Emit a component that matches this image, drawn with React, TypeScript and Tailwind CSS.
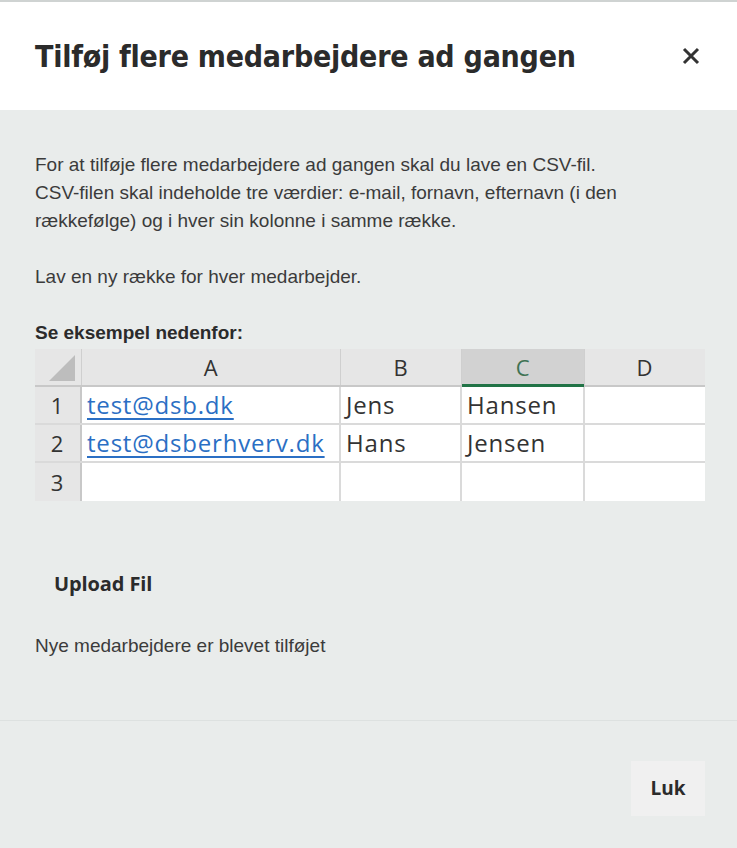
import React from "react";

const cols = [
  { label: "", w: "w-[47px]" },
  { label: "A", w: "w-[259px]" },
  { label: "B", w: "w-[121px]" },
  { label: "C", w: "w-[123px]" },
  { label: "D", w: "flex-1" },
];

const rows = [
  ["1", "test@dsb.dk", "Jens", "Hansen", ""],
  ["2", "test@dsberhverv.dk", "Hans", "Jensen", ""],
  ["3", "", "", "", ""],
];

const Sheet: React.FC = () => {
  return (
    <div className="w-[670px] font-['Open_Sans',sans-serif] text-[24px] tracking-[0.8px] text-[#333]">
      <div className="flex h-[38px] bg-[#e6e6e6] border-b-2 border-[#c8c8c8] text-[22px]">
        {cols.map((c, i) => (
          <div
            key={i}
            className={`${c.w} relative flex items-center justify-center border-r border-[#cfcfcf] last:border-r-0 ${
              c.label === "C" ? "bg-[#d2d2d2] text-[#3f7354]" : ""
            }`}
          >
            {i === 0 ? (
              <div className="absolute right-[6px] bottom-[4px] w-0 h-0 border-l-[26px] border-l-transparent border-b-[26px] border-b-[#bdbdbd]" />
            ) : (
              c.label
            )}
            {c.label === "C" && (
              <div className="absolute left-0 right-0 -bottom-[2px] h-[3px] bg-[#217346]" />
            )}
          </div>
        ))}
      </div>
      {rows.map((r, ri) => (
        <div
          key={ri}
          className={`flex h-[38px] bg-white ${ri < rows.length - 1 ? "border-b-2 border-[#dadada]" : "h-[37px]"}`}
        >
          {r.map((cell, ci) => (
            <div
              key={ci}
              className={`${cols[ci].w} flex items-center leading-none border-r-2 border-[#dadada] last:border-r-0 ${
                ci === 0
                  ? "justify-center bg-[#e6e6e6] border-r-[#c8c8c8] text-[22px]"
                  : "px-[5px]"
              }`}
            >
              {ci === 1 && cell ? (
                <span className="text-[#2b6fc4] underline underline-offset-[4px] decoration-[1.5px]">
                  {cell}
                </span>
              ) : (
                cell
              )}
            </div>
          ))}
        </div>
      ))}
    </div>
  );
};

export default function App() {
  return (
    <div className="w-[737px] h-[848px] bg-[#e9eceb] border-t-2 border-[#cfd3d2] flex flex-col">
      <div className="h-[108px] bg-white flex items-center justify-between pl-[35px] pr-[34px]">
        <h1 className="font-['DejaVu_Sans_Condensed','DejaVu_Sans',sans-serif] font-bold text-[30px] text-[#2b2b2b] tracking-[-0.25px]">
          Tilføj flere medarbejdere ad gangen
        </h1>
        <button className="w-[24px] h-[24px] flex items-center justify-center text-[#333]">
          <svg width="18" height="18" viewBox="0 0 18 18">
            <path
              d="M2 2 L16 16 M16 2 L2 16"
              stroke="currentColor"
              strokeWidth="3"
              strokeLinecap="butt"
            />
          </svg>
        </button>
      </div>

      <div className="flex-1 flex flex-col">
        <div className="px-[35px] pt-[41px] pb-[60px] border-b border-[#dde1e0] font-['Liberation_Sans',Arial,sans-serif] text-[19px] leading-[28px] text-[#3b3b3b]">
          <p>
            For at tilføje flere medarbejdere ad gangen skal du lave en CSV-fil.
            <br />
            CSV-filen skal indeholde tre værdier: e-mail, fornavn, efternavn (i
            den rækkefølge) og i hver sin kolonne i samme række.
          </p>
          <p className="mt-[28px]">Lav en ny række for hver medarbejder.</p>
          <p className="mt-[28px] font-bold text-[#2b2b2b]">Se eksempel nedenfor:</p>
          <div className="mt-[2px]">
            <Sheet />
          </div>
          <button className="mt-[59px] h-[48px] px-[19px] font-['Open_Sans',sans-serif] font-bold text-[20px] text-[#2b2b2b] tracking-[-0.1px]">
            Upload Fil
          </button>
          <p className="mt-[24px]">Nye medarbejdere er blevet tilføjet</p>
        </div>

        <div className="flex justify-end pt-[40px] pr-[32px]">
          <button className="w-[74px] h-[55px] bg-[#f0f0f0] font-['Open_Sans',sans-serif] font-bold text-[19px] text-[#2b2b2b]">
            Luk
          </button>
        </div>
      </div>
    </div>
  );
}
